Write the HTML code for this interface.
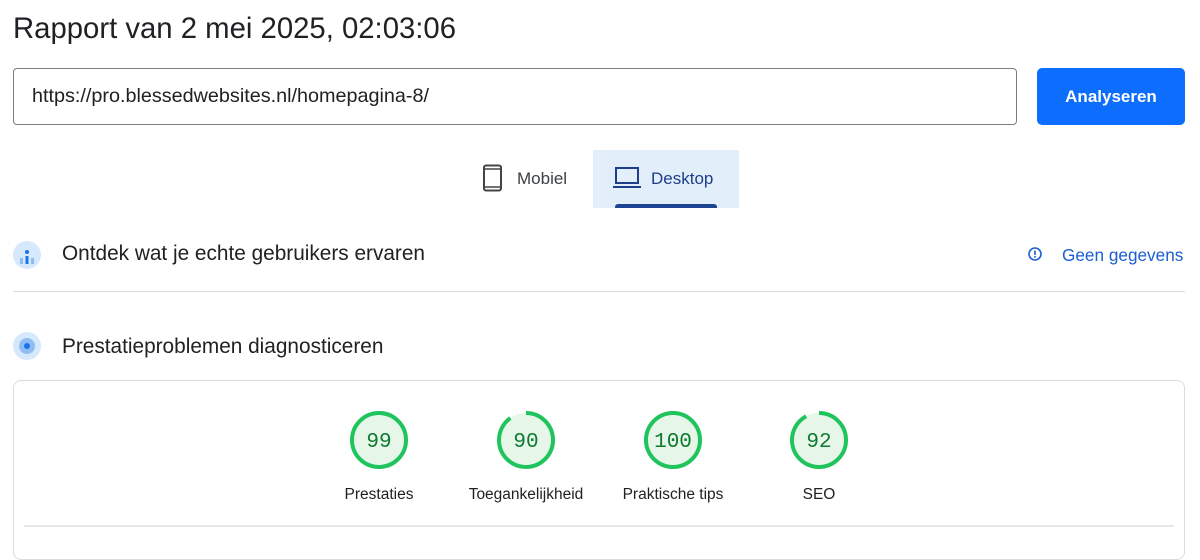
<!DOCTYPE html>
<html><head><meta charset="utf-8"><style>
*{margin:0;padding:0;box-sizing:border-box}
body{width:1200px;height:544px;background:#fff;font-family:"Liberation Sans",sans-serif;color:#202124;position:relative;overflow:hidden}
.a{position:absolute}
</style></head><body>
<div class="a" style="left:13px;top:12px;font-size:29.3px;color:#202124;">Rapport van 2 mei 2025, 02:03:06</div>
<div class="a" style="left:13px;top:68px;width:1004px;height:57px;border:1px solid #7d7d7d;border-radius:4px;"></div>
<div class="a" style="left:32px;top:85px;font-size:19.8px;color:#202124;">https://pro.blessedwebsites.nl/homepagina-8/</div>
<div class="a" style="left:1037px;top:68px;width:148px;height:57px;background:#0d6efd;border-radius:5px;color:#fff;font-size:17px;font-weight:bold;text-align:center;line-height:57px;">Analyseren</div>

<svg class="a" style="left:482px;top:164px" width="22" height="28" viewBox="0 0 22 28"><rect x="2" y="1.5" width="17" height="25" rx="2" fill="none" stroke="#444" stroke-width="2"/><line x1="2" y1="5" x2="19" y2="5" stroke="#444" stroke-width="1.5"/><line x1="2" y1="23" x2="19" y2="23" stroke="#444" stroke-width="1.5"/></svg>
<div class="a" style="left:517px;top:169px;font-size:17px;color:#3c4043;">Mobiel</div>
<div class="a" style="left:593px;top:150px;width:146px;height:58px;background:#e3eefb;"></div>
<svg class="a" style="left:612px;top:166px" width="30" height="24" viewBox="0 0 30 24"><rect x="4" y="2" width="22" height="15" fill="none" stroke="#1d3f8a" stroke-width="2"/><line x1="1" y1="21" x2="29" y2="21" stroke="#1d3f8a" stroke-width="2"/></svg>
<div class="a" style="left:651px;top:169px;font-size:17px;color:#1d3f8a;">Desktop</div>
<div class="a" style="left:615px;top:204px;width:102px;height:4px;background:#1d4594;border-radius:3px 3px 0 0;"></div>

<svg class="a" style="left:12px;top:239px" width="30" height="32" viewBox="0 0 30 32"><circle cx="15" cy="16" r="14" fill="#d6e8fb"/><circle cx="15" cy="13" r="2" fill="#1a73e8"/><rect x="13.5" y="17" width="3" height="8" fill="#1a73e8"/><rect x="8" y="19" width="3" height="6" fill="#8fbdf2"/><rect x="19" y="19" width="3" height="6" fill="#8fbdf2"/></svg>
<div class="a" style="left:62px;top:242px;font-size:20.8px;">Ontdek wat je echte gebruikers ervaren</div>
<svg class="a" style="left:1027px;top:246px" width="16" height="16" viewBox="0 0 16 16"><circle cx="8" cy="8" r="6" fill="none" stroke="#1a5fd0" stroke-width="1.6"/><rect x="7.2" y="4.5" width="1.6" height="4.5" fill="#1a5fd0"/><rect x="7.2" y="10" width="1.6" height="1.6" fill="#1a5fd0"/></svg>
<div class="a" style="left:1062px;top:245px;font-size:17.2px;color:#1a5fd0;">Geen gegevens</div>
<div class="a" style="left:13px;top:291px;width:1172px;height:1px;background:#dadce0;"></div>

<svg class="a" style="left:12px;top:331px" width="30" height="30" viewBox="0 0 30 30"><circle cx="15" cy="15" r="14" fill="#d6e8fb"/><circle cx="15" cy="15" r="8" fill="#8fbdf2"/><circle cx="15" cy="15" r="3" fill="#1a73e8"/></svg>
<div class="a" style="left:62px;top:335px;font-size:20.8px;">Prestatieproblemen diagnosticeren</div>

<div class="a" style="left:13px;top:380px;width:1172px;height:180px;border:1px solid #dadce0;border-radius:8px;"></div>
<div class="a" style="left:24px;top:525px;width:1150px;height:2px;background:#e8e8e8;"></div>

<svg class="a" style="left:0;top:400px" width="1200" height="120">
<g font-family="Liberation Mono, monospace" font-size="21" fill="#0d7a2e" text-anchor="middle">
<circle cx="379" cy="40" r="27" fill="#e6f7ea" stroke="#1fc45c" stroke-width="4"/>
<text x="379" y="47">99</text>
<circle cx="526" cy="40" r="27" fill="#e6f7ea"/>
<circle cx="526" cy="40" r="27" fill="none" stroke="#1fc45c" stroke-width="4" stroke-dasharray="152.7 169.6" transform="rotate(-90 526 40)"/>
<text x="526" y="47">90</text>
<circle cx="673" cy="40" r="27" fill="#e6f7ea" stroke="#1fc45c" stroke-width="4"/>
<text x="673" y="47">100</text>
<circle cx="819" cy="40" r="27" fill="#e6f7ea"/>
<circle cx="819" cy="40" r="27" fill="none" stroke="#1fc45c" stroke-width="4" stroke-dasharray="156 169.6" transform="rotate(-90 819 40)"/>
<text x="819" y="47">92</text>
</g>
<g font-family="Liberation Sans, sans-serif" font-size="15.5" fill="#202124" text-anchor="middle">
<text x="379" y="99">Prestaties</text>
<text x="526" y="99">Toegankelijkheid</text>
<text x="673" y="99">Praktische tips</text>
<text x="819" y="99">SEO</text>
</g>
</svg>
</body></html>
